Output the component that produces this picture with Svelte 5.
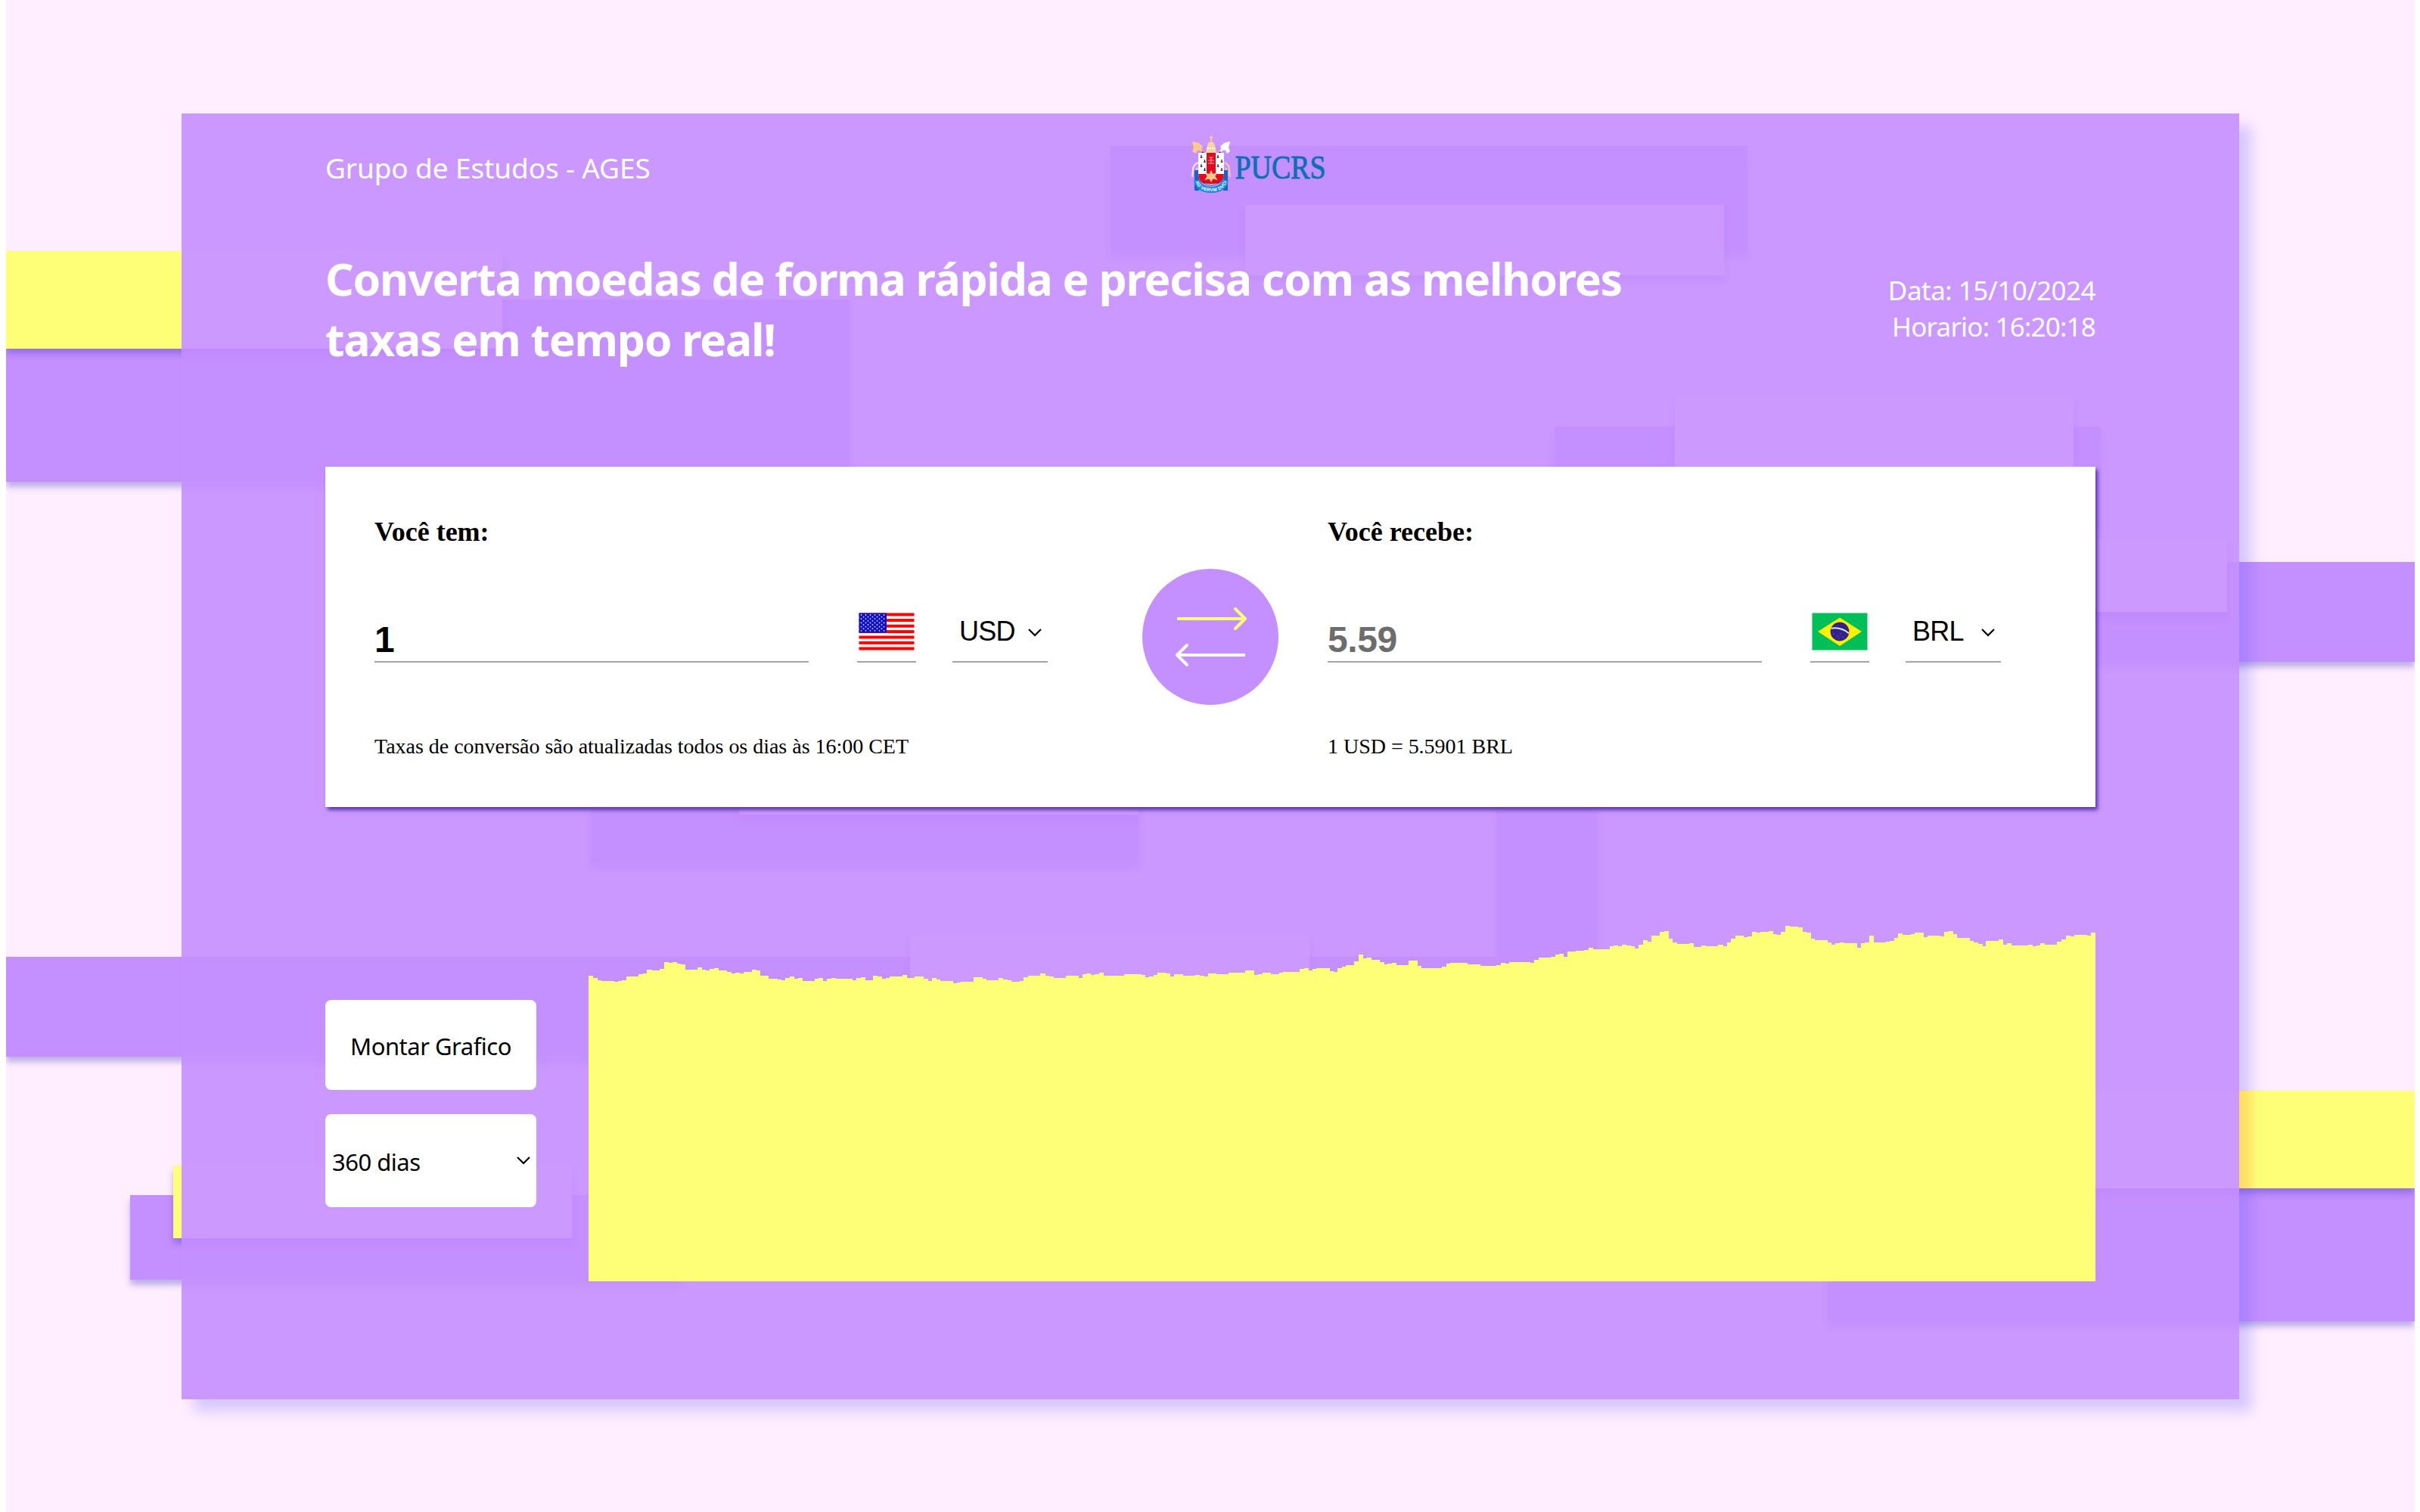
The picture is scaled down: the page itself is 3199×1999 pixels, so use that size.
<script>
  // Decorative rectangles: [kind, left, top, right, bottom] on the page canvas.
  const shapes = [
    ['violet', 0, 396, 1115, 637],
    ['yellow', 0, 332, 656, 461],
    ['violet', 1460, 193, 2302, 332],
    ['yellow', 1638, 271, 2271, 364],
    ['violet', 2047, 564, 2769, 700],
    ['yellow', 2206, 523, 2733, 640],
    ['violet', 2400, 743, 3184, 875],
    ['yellow', 2400, 712, 2936, 809],
    ['violet', 773, 1000, 1497, 1141],
    ['yellow', 969, 980, 1497, 1077],
    ['violet', 1970, 1000, 2103, 1397],
    ['violet', 0, 1265, 2103, 1397],
    ['yellow', 1195, 1235, 1723, 1332],
    ['violet', 164, 1580, 890, 1692],
    ['yellow', 221, 1541, 748, 1637],
    ['violet', 2409, 1500, 3184, 1747],
    ['yellow', 2409, 1442, 3184, 1571]
  ];

  // Outline of the series: horizontal position and depth of every step.
  const early = [27,269,36,278,44,287,53,290,78,293,86,290,95,287,103,272,128,263,137,260,145,245,153,248,170,242,178,215,186,218,194,215,203,221,211,224,220,245,245,237,253,245,261,248,270,242,278,239,286,248,303,254,311,260,320,257,329,260,337,255,353,245,362,248,370,269,386,281,403,284,412,287,420,278,428,272,436,281,445,278,453,290,479,282,487,278,495,292,504,281,512,278,520,281,553,287,561,278,570,275,578,287,597,269,604,272,612,281,620,278,629,272,654,266,662,278,678,272,695,281,703,290,712,278,720,284,728,290,754,301,762,298,770,293,795,275,812,281,820,287,845,279,853,284,862,287,870,293,887,290,896,275,904,271,929,261,937,269,946,272,954,278,979,269,1004,278,1012,263,1021,260,1029,266,1037,263,1046,257,1054,269,1095,263,1129,266,1137,275,1146,272,1154,266,1162,257,1179,261,1187,272,1196,263,1212,269,1237,266,1246,269,1254,272,1262,260,1279,263,1304,257,1338,248,1354,266,1363,263,1371,257,1388,263,1405,257,1413,254,1446,242,1455,239,1463,248,1471,242,1480,239,1504,251];
  const late = [5,254,12,240,21,234,30,228,47,213,54,185,63,201,71,197,80,207,96,215,104,224,113,221,121,218,130,228,155,209,172,230,180,239,222,233,229,221,238,218,271,224,297,230,330,227,338,218,347,221,354,215,398,218,404,206,413,197,439,194,447,185,455,182,463,194,472,173,489,170,505,167,514,158,522,166,530,164,555,152,564,149,572,152,580,146,589,150,597,152,606,161,614,146,622,128,630,134,639,110,655,95,663,92,671,122,680,137,689,143,714,140,722,155,739,149,747,152,772,146,780,152,789,137,797,122,806,110,822,116,830,113,838,95,847,98,855,96,872,92,880,104,888,107,897,95,905,71,914,76,930,79,938,95,947,100,956,122,964,130,989,137,998,146,1006,140,1014,137,1023,140,1046,158,1055,140,1064,137,1072,110,1080,137,1106,134,1114,131,1122,119,1131,101,1139,107,1156,104,1164,98,1181,116,1189,110,1214,113,1223,96,1231,92,1240,104,1248,119,1273,131,1281,137,1289,143,1298,152,1306,131,1331,125,1339,146,1347,140,1355,149,1390,146,1398,152,1407,149,1415,140,1423,146,1447,134,1455,125,1464,110,1473,113,1481,107,1506,110,1515,98];

  const DAYS = 360;
  const STEP = 8.343;

  function expand() {
    const tops = new Array(DAYS).fill(null);
    for (let i = 0; i < early.length; i += 2) tops[Math.round((early[i] - 27) / STEP)] = early[i + 1];
    for (let i = 0; i < late.length; i += 2) tops[Math.min(DAYS - 1, Math.round(late[i] / STEP + 177.5))] = late[i + 1];
    for (let i = 1; i < DAYS; i++) if (tops[i] === null) tops[i] = tops[i - 1];
    return tops.map((t) => 494 - t / 3);
  }
  const bars = expand();

  const sides = [
    { title: 'Você tem:', value: '1', code: 'USD', flag: 'us', note: 'Taxas de conversão são atualizadas todos os dias às 16:00 CET' },
    { title: 'Você recebe:', value: '5.59', code: 'BRL', flag: 'br', note: '1 USD = 5.5901 BRL' }
  ];
</script>

{#snippet decor()}
  {#each shapes as [kind, l, t, r, b]}
    <i class="shape {kind}" style="left:{l}px;top:{t}px;width:{r - l}px;height:{b - t}px"></i>
  {/each}
{/snippet}

{#snippet chevron()}
  <svg class="chevron" width="20" height="12" viewBox="0 0 20 12"><path d="M2 2l8 8 8-8" fill="none" stroke="#000" stroke-width="2.2" /></svg>
{/snippet}

{#snippet side(s, dim)}
  <section class="side">
    <h2>{s.title}</h2>
    <div class="row">
      <div class="amount" class:dim>{s.value}</div>
      <div class="flag">
        {#if s.flag === 'us'}
          <svg width="74" height="50" viewBox="0 0 74 50">
            <rect width="74" height="50" fill="#fff" />
            {#each [0, 7.6, 15.2, 22.6, 30, 37.4, 45] as y}
              <rect x="0.5" y={y + 0.5} width="73" height="4" fill="#f00" />
            {/each}
            <rect x="0.5" y="0.5" width="36.5" height="26" fill="#1010c8" />
            {#each Array(9) as _, r}
              {#each Array(r % 2 ? 5 : 6) as _, c}
                <circle cx={3.5 + c * 6 + (r % 2 ? 3 : 0)} cy={3 + r * 2.6} r="0.9" fill="#dcdcff" />
              {/each}
            {/each}
          </svg>
        {:else}
          <svg width="74" height="50" viewBox="0 0 74 50">
            <rect x="0.5" y="0.5" width="73" height="49" fill="#00bf58" />
            <path d="M37 6.5L66 25 37 44 8 25z" fill="#fff200" />
            <circle cx="37" cy="25" r="12.4" fill="#33208c" />
            <path d="M25.4 20.8C33 19.4 42 21.500 49 27.200" fill="none" stroke="#cfeee6" stroke-width="2" />
            <g fill="#7a6cc0"><circle cx="29" cy="28" r=".7" /><circle cx="34" cy="31" r=".7" /><circle cx="38" cy="28" r=".7" /><circle cx="41" cy="32" r=".7" /><circle cx="36" cy="34" r=".7" /></g>
          </svg>
        {/if}
      </div>
      <div class="select"><span>{s.code}</span>{@render chevron()}</div>
    </div>
    <p>{s.note}</p>
  </section>
{/snippet}

<div class="page">
  {@render decor()}
  <main class="panel">
    <div class="muted"><div class="canvas">{@render decor()}</div></div>
    <header>
      <span class="group">Grupo de Estudos - AGES</span>
      <svg class="logo" width="200" height="84" viewBox="0 0 200 84">
        <!-- crossed keys -->
        <path d="M6 13l28 26" stroke="#f3c58a" stroke-width="3" />
        <path d="M50 13L22 39" stroke="#fff" stroke-width="3" />
        <path d="M3 9l9 2 5 5-2 4-5 1-2 4-5-3 2-5z" fill="#fdc98a" />
        <path d="M53 9l-8 2-5 5 2 4 5 1 2 4 4-3-2-5z" fill="#fff" />
        <!-- tiara -->
        <path d="M22 35l-1-9 1-9 3-7h6l3 7 1 9-1 9z" fill="#fbd5a0" />
        <path d="M28 1v9M26 4h4" stroke="#fdc98a" stroke-width="1.800" />
        <path d="M23 18h10M22 27h12" stroke="#fff" stroke-width="2" stroke-dasharray="2 1" />
        <path d="M18 31q-4-12 1-5M38 31q4-12-1-5M18 31q3 4 7 1M38 31q-3 4-7 1" fill="none" stroke="#c01830" stroke-width="2.400" />
        <!-- supporters and motto ribbon -->
        <path d="M11 37q-7 3-7 9l-1 10M10 44q-4 5-2 12" fill="none" stroke="#f1e8ff" stroke-width="2" />
        <path d="M46 37q6 3 6 9l1 10M47 44q4 5 2 12" fill="none" stroke="#f6cd9c" stroke-width="2" />
        <path d="M6 47h6v27H6zM44 47h6v27h-6z" fill="#1a62c4" />
        <path id="ribbon" d="M9 60q3 13 19 13t19-13" fill="none" stroke="#168be6" stroke-width="8" />
        <!-- shield -->
        <path d="M11 24h34v26q0 15-17 16Q11 65 11 50z" fill="#fff" />
        <path d="M22 24h12v28h11q-1 11-8 13H19q-7-2-8-13h11z" fill="#e50920" />
        <path d="M18 63q10 4 20 0-4 4-10 4t-10-4z" fill="#fff" stroke="#222" stroke-width=".7" />
        <g stroke="#222" stroke-width="1.200">
          <path d="M15 27v4M19.500 33v4M15 39v4M19.500 44v4M37 27v4M42 33v4M37 39v4M42 44v4M13.500 30h3M18 36h3M13.500 42h3M18 47h3M35.500 30h3M40.500 36h3M35.500 42h3M40.500 47h3" />
        </g>
        <path d="M25 30h6M28 30v8M24 34h8M24 38h8" stroke="#f6a0a0" stroke-width="1.200" />
        <path d="M28 47l2.500 5 6-2-3 5 3 5-6-1.500L28 63l-2.500-4.500-6 1.500 3-5-3-5 6 2z" fill="#fdc98a" />
        <text class="motto" font-size="6"><textPath href="#ribbon" startOffset="1">AD VERVM DVCIT</textPath></text>
        <text class="name" x="59.500" y="57.500" textLength="120" lengthAdjust="spacingAndGlyphs">PUCRS</text>
      </svg>
    </header>
    <div class="hero">
      <h1>Converta moedas de forma rápida e precisa com as melhores<br />taxas em tempo real!</h1>
      <div class="clock"><div>Data: 15/10/2024</div><div class="time">Horario: 16:20:18</div></div>
    </div>
    <div class="card">
      {@render side(sides[0], false)}
      <div class="swap">
        <svg width="100" height="80" viewBox="0 0 100 80" fill="none" stroke-width="4" stroke-linejoin="round">
          <g stroke="#ffff75"><path d="M6 16h88" /><path d="M83 3l13 13-13 13" stroke-linecap="round" /></g>
          <g stroke="#fff"><path d="M6 64h90" /><path d="M19 51L6 64l13 13" stroke-linecap="round" /></g>
        </svg>
      </div>
      {@render side(sides[1], true)}
    </div>
    <div class="history">
      <div class="controls">
        <div class="btn"><span>Montar Grafico</span></div>
        <div class="btn range"><span>360 dias</span>{@render chevron()}</div>
      </div>
      <div class="chart">
        {#each bars as h}<i style="height:{h}px"></i>{/each}
      </div>
    </div>
  </main>
  <i class="edge"></i>
</div>

<style>
  :global(body) { margin: 0; background: #fff; }
  .page {
    position: relative;
    box-sizing: border-box;
    width: 3184px;
    height: 1999px;
    margin-left: 8px;
    padding: 150px 0 0 232px;
    overflow: hidden;
    background: #ffeeff;
  }
  .shape { position: absolute; box-shadow: 0 7px 8px rgba(75, 60, 185, 0.36); }
  .violet { background: #c48fff; }
  .yellow { background: #ffff77; }
  .panel {
    position: relative;
    box-sizing: border-box;
    width: 2720px;
    height: 1700px;
    padding: 0 190px;
    background: #ca98ff;
    box-shadow: 16px 16px 16px rgba(100, 90, 250, 0.26);
    font-family: "Noto Sans", "Open Sans", sans-serif;
    color: #fff;
  }
  .muted { position: absolute; inset: 0; overflow: hidden; }
  .canvas { position: absolute; left: -232px; top: -150px; }
  .muted .shape { box-shadow: 0 8px 8px rgba(184, 130, 255, 0.32); }
  .muted .yellow { background: #cc9aff; }
  .edge {
    position: absolute;
    left: 2952px;
    top: 1442px;
    width: 26px;
    height: 129px;
    background: linear-gradient(90deg, #ffdc64, #ffe268 35%, #ffff77);
  }
  header, .hero, .card, .history { position: relative; display: flex; }
  header { height: 180px; }
  .group { width: 1143px; padding-top: 46px; font-size: 37px; line-height: 52px; letter-spacing: -0.12px; white-space: nowrap; }
  .logo { margin-top: 28px; overflow: visible; }
  .motto { fill: #fff; font-family: "Liberation Sans", sans-serif; font-weight: 700; dominant-baseline: middle; }
  .name { fill: #0a70b8; stroke: #0a70b8; stroke-width: 0.9px; font-family: "Liberation Serif", serif; font-size: 44px; }
  .hero { height: 287px; justify-content: space-between; }
  h1 { margin: -2px 0 0; font-size: 59px; line-height: 80px; font-weight: 700; letter-spacing: -1.34px; white-space: nowrap; }
  .clock { padding-top: 30px; font-size: 35px; line-height: 48px; letter-spacing: -0.5px; text-align: right; }
  .time { letter-spacing: -0.8px; }
  .card {
    box-sizing: border-box;
    height: 450px;
    padding-left: 65px;
    background: #fff;
    color: #000;
    box-shadow: 3px 4px 5px #5b35a8;
    font-family: "Liberation Serif", serif;
  }
  .side { width: 1015px; }
  .swap {
    display: flex;
    align-items: center;
    justify-content: center;
    width: 180px;
    height: 180px;
    margin: 135px 65px 0 0;
    border-radius: 50%;
    background: #c48fff;
  }
  h2 { margin: 66px 0 0; font-size: 36px; line-height: 40px; }
  .row { display: flex; height: 153px; align-items: flex-end; }
  .amount, .flag, .select { box-sizing: border-box; border-bottom: 2px solid #a3a3a3; }
  .amount { width: 574px; margin-right: 64px; height: 60px; font: 700 48px/60px "Liberation Sans", sans-serif; letter-spacing: -0.4px; }
  .amount.dim { color: #6d6d6d; }
  .flag { width: 78px; height: 66px; margin-right: 48px; padding-left: 2px; }
  .flag svg { display: block; }
  .select {
    display: flex;
    justify-content: space-between;
    width: 126px;
    height: 66px;
    padding: 4px 7px 0 9px;
    font: 36px/42px "Liberation Sans", sans-serif;
    letter-spacing: -0.7px;
  }
  .select .chevron { margin-top: 16px; }
  p { margin: 95px 0 0; font-size: 28px; line-height: 32px; letter-spacing: -0.02px; }
  .history { height: 627px; align-items: flex-end; }
  .controls { display: flex; flex-direction: column; gap: 32px; width: 279px; margin: 0 69px 98px 0; }
  .btn {
    display: flex;
    box-sizing: border-box;
    height: 119px;
    align-items: center;
    justify-content: center;
    padding-top: 2px;
    border-radius: 8px;
    background: #fff;
    color: #000;
    font-size: 31px;
    letter-spacing: -0.5px;
    white-space: nowrap;
  }
  .range { height: 123px; justify-content: space-between; padding: 2px 7px 0 9px; }
  .range .chevron { margin-top: -3px; }
  .chart { display: flex; align-items: flex-end; width: 1992px; height: 480px; }
  .chart i { flex: 1 1 0; margin-right: -0.6px; background: #ffff77; }
</style>
